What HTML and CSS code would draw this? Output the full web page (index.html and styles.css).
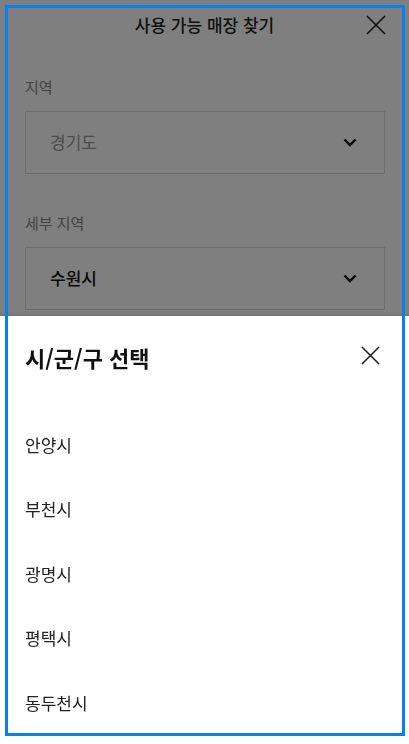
FILE: index.html
```html
<!DOCTYPE html>
<html lang="ko">
<head>
    <meta charset="UTF-8">
    <meta name="viewport" content="width=device-width, initial-scale=1.0">
    <title>사용 가능 매장 찾기</title>
    <link rel="stylesheet" href="styles.css">
</head>
<body>
    <div class="page">
        <div class="page-header">
            <h1>사용 가능 매장 찾기</h1>
            <button class="icon-button close-page" type="button" aria-label="닫기">
                <svg width="20" height="20" viewBox="0 0 20 20"><path d="M1 1 L19 19 M19 1 L1 19" stroke="#222" stroke-width="1.6" fill="none"/></svg>
            </button>
        </div>

        <div class="store-form">
            <label class="field-label">지역</label>
            <div class="select-box">
                <span class="select-value placeholder">경기도</span>
                <svg class="chevron" width="14" height="9" viewBox="0 0 14 9"><path d="M1.5 1.5 L7 7 L12.5 1.5" stroke="#111" stroke-width="2.4" fill="none"/></svg>
            </div>

            <label class="field-label">세부 지역</label>
            <div class="select-box">
                <span class="select-value">수원시</span>
                <svg class="chevron" width="14" height="9" viewBox="0 0 14 9"><path d="M1.5 1.5 L7 7 L12.5 1.5" stroke="#111" stroke-width="2.4" fill="none"/></svg>
            </div>
        </div>
    </div>

    <div class="dim"></div>

    <div class="bottom-sheet">
        <div class="sheet-header">
            <h2>시/군/구 선택</h2>
            <button class="icon-button" type="button" aria-label="닫기">
                <svg width="19" height="19" viewBox="0 0 19 19"><path d="M1 1 L18 18 M18 1 L1 18" stroke="#222" stroke-width="1.6" fill="none"/></svg>
            </button>
        </div>
        <ul class="option-list">
            <li>안양시</li>
            <li>부천시</li>
            <li>광명시</li>
            <li>평택시</li>
            <li>동두천시</li>
        </ul>
    </div>

    <div class="focus-frame"></div>
</body>
</html>
```

FILE: styles.css
```css
* {
    margin: 0;
    padding: 0;
    box-sizing: border-box;
}

body {
    font-family: "Noto Sans CJK KR", "Noto Sans", sans-serif;
    background: white;
    color: #222;
    height: 744px;
    overflow: hidden;
}

.icon-button {
    background: none;
    border: none;
    display: flex;
    align-items: center;
    justify-content: center;
    cursor: pointer;
}

/* page under the dim layer */
.page-header {
    height: 50px;
    display: flex;
    align-items: center;
    justify-content: center;
    position: relative;
}

.page-header h1 {
    font-size: 17px;
    font-weight: 500;
    color: #222;
    margin-top: -2px;
}

.close-page {
    position: absolute;
    right: 23px;
    top: 15px;
}

.store-form {
    padding: 27px 24px 0 25px;
    display: flex;
    flex-direction: column;
}

.field-label {
    font-size: 15px;
    line-height: 20px;
    color: #888;
    margin-bottom: 14px;
}

.select-box {
    height: 63px;
    border: 1px solid #dcdcdc;
    display: flex;
    align-items: center;
    justify-content: space-between;
    padding: 0 27px 0 24px;
    margin-bottom: 39px;
}

.select-value {
    font-size: 17px;
    font-weight: 500;
    color: #111;
    margin-top: -2px;
}

.select-value.placeholder {
    color: #999;
    font-weight: 400;
}

.dim {
    position: fixed;
    inset: 0;
    background: rgba(0, 0, 0, 0.5);
}

/* bottom sheet */
.bottom-sheet {
    position: fixed;
    left: 0;
    right: 0;
    bottom: 0;
    height: 428px;
    background: white;
    box-shadow: 0 -1px 3px rgba(0, 0, 0, 0.15);
}

.sheet-header {
    height: 82px;
    display: flex;
    align-items: center;
    justify-content: space-between;
    padding: 0 29px 0 25px;
}

.sheet-header h2 {
    font-size: 22px;
    font-weight: 700;
    color: #111;
}

.sheet-header .icon-button {
    margin-top: -4px;
}

.option-list {
    list-style: none;
    padding: 14px 25px 0;
}

.option-list li {
    height: 64.5px;
    display: flex;
    align-items: center;
    font-size: 17px;
    color: #222;
}

.focus-frame {
    position: fixed;
    left: 5px;
    top: 5px;
    right: 4px;
    bottom: 8px;
    border: 3px solid #0a7ff2;
    pointer-events: none;
}
```
